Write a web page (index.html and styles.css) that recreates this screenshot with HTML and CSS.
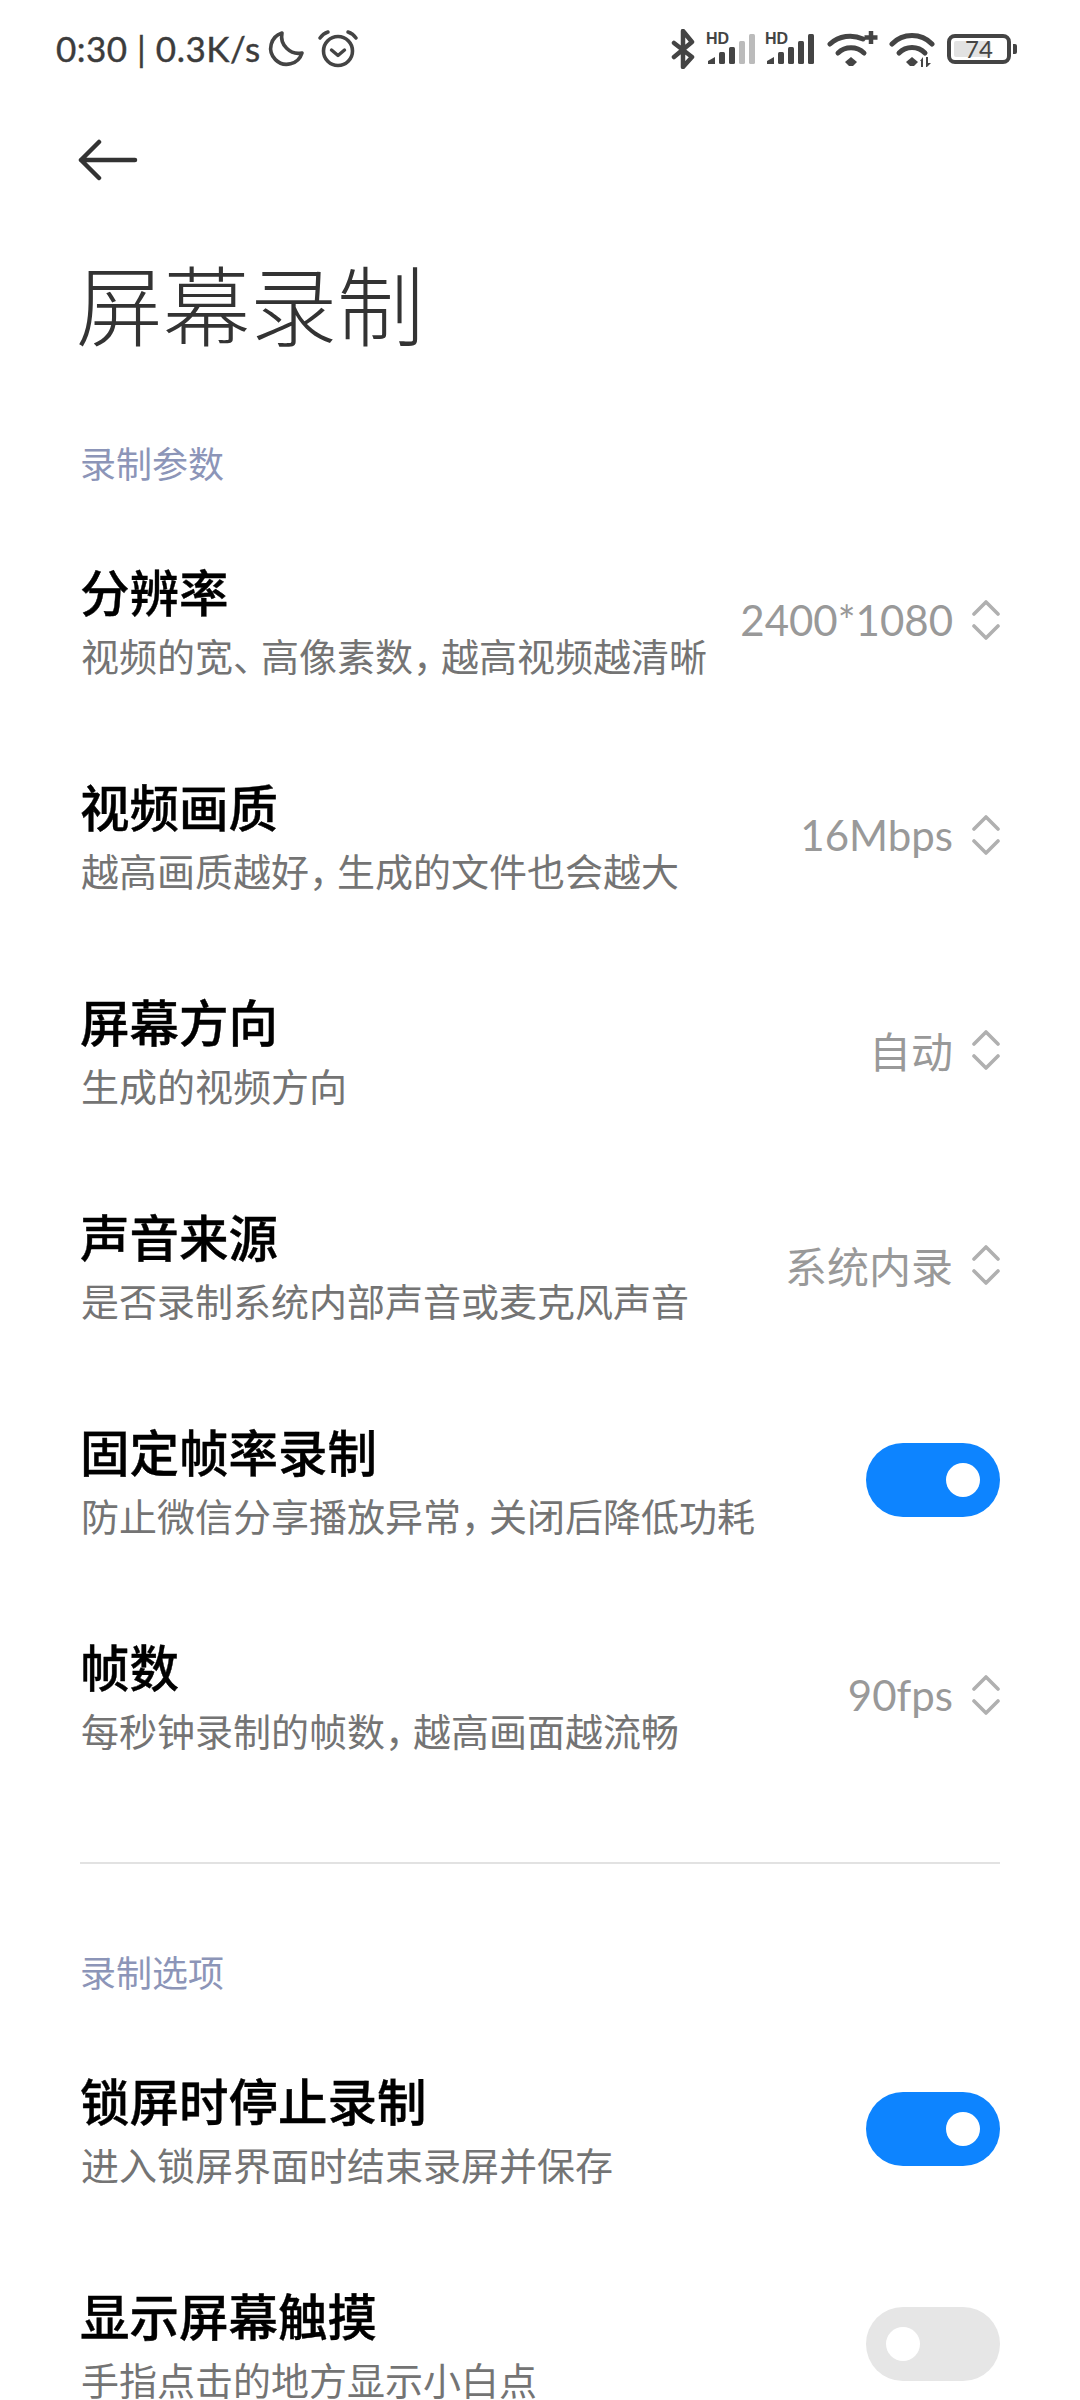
FILE: index.html
```html
<!DOCTYPE html>
<html lang="zh-CN">
<head>
  <meta charset="UTF-8" />
  <meta name="viewport" content="width=device-width, initial-scale=1.0" />
  <title>屏幕录制</title>
  <link rel="stylesheet" href="styles.css">
</head>
<body>
  <div class="status-bar">
    <div class="status-left">
      <span class="status-text">0:30 | 0.3K/s</span>
      <svg class="moon" width="38" height="38" viewBox="0 0 38 38"><path d="M15 3 A16 16 0 1 0 35 23 A17 17 0 0 1 15 3 Z" fill="none" stroke="#444" stroke-width="3.6" stroke-linejoin="round"/></svg>
      <svg class="alarm" width="40" height="38" viewBox="0 0 40 38"><circle cx="20" cy="21" r="14.5" fill="none" stroke="#444" stroke-width="3.6"/><path d="M13.500 20 L20 25.500 L26.500 20" fill="none" stroke="#444" stroke-width="3.4" stroke-linecap="round" stroke-linejoin="round"/><path d="M2 8 Q5 3.500 10 2 M30 2 Q35 3.500 38 8" fill="none" stroke="#444" stroke-width="3.4" stroke-linecap="round"/></svg>
    </div>
    <div class="status-right">
      <svg class="bt" width="24" height="40" viewBox="0 0 24 40"><path d="M3 14 L21 28 L12 38 V2 L21 13 L3 28" fill="none" stroke="#444" stroke-width="4.500" stroke-linecap="round" stroke-linejoin="round"/></svg>
      <div class="signal first">
        <span class="hd">HD</span>
        <svg width="50" height="34" viewBox="0 0 50 34"><g fill="#444"><path d="M2 29 L9 25 V32 H2 Z"/><rect x="13" y="20" width="6" height="12" rx="1.500"/><rect x="23" y="15" width="6" height="17" rx="1.500"/></g><rect x="33" y="9" width="6" height="23" rx="1.500" fill="#bbb"/><rect x="43" y="2" width="6" height="30" rx="1.500" fill="#bbb"/></svg>
      </div>
      <div class="signal">
        <span class="hd">HD</span>
        <svg width="50" height="34" viewBox="0 0 50 34"><g fill="#444"><path d="M2 29 L9 25 V32 H2 Z"/><rect x="13" y="20" width="6" height="12" rx="1.500"/><rect x="23" y="15" width="6" height="17" rx="1.500"/><rect x="33" y="9" width="6" height="23" rx="1.500"/><rect x="43" y="2" width="6" height="30" rx="1.500"/></g></svg>
      </div>
      <svg width="51" height="36" viewBox="0 0 51 36"><g fill="none" stroke="#444" stroke-width="5" stroke-linecap="round"><path d="M3 13 A30 30 0 0 1 36 8"/><path d="M11 22 A19 19 0 0 1 37 22"/></g><path d="M24 26 L30 31 L26 35 H22 L18 31 Z" fill="#444"/><path d="M44 0 V13 M37.500 6.500 H50.500" stroke="#444" stroke-width="4.500"/></svg>
      <svg class="wifi-two" width="46" height="36" viewBox="0 0 46 36"><g fill="none" stroke="#444" stroke-width="5" stroke-linecap="round"><path d="M3 13 A28 28 0 0 1 43 13"/><path d="M10 22 A18 18 0 0 1 36 22"/></g><path d="M23 26 L29 31 L25 35 H21 L17 31 Z" fill="#444"/><path d="M31 30 L34 26 V36 H32 V30 Z M37 26 H39 V32 H42 L38 36 H37 Z" fill="#444"/></svg>
      <div class="battery">
        <div class="battery-body"><div class="battery-fill"></div><span class="battery-num">74</span></div>
        <div class="battery-tip"></div>
      </div>
    </div>
  </div>

  <div class="toolbar">
    <svg width="60" height="44" viewBox="0 0 60 44"><path d="M21 4 L3 22 L21 40 M3 22 H57" fill="none" stroke="#333" stroke-width="4.500" stroke-linecap="round" stroke-linejoin="round"/></svg>
  </div>

  <h1 class="page-title">屏幕录制</h1>

  <div class="section-label">录制参数</div>

  <div class="row">
    <div class="row-text"><div class="row-title">分辨率</div><div class="row-sub">视频的宽<span class="punct">、</span>高像素数<span class="punct">，</span>越高视频越清晰</div></div>
    <div class="row-value"><span>2400*1080</span><svg class="updown" width="29" height="44" viewBox="0 0 29 44"><path d="M3 16 L15 4 L27 16 M3 28 L15 40 L27 28" fill="none" stroke="#b0b0b0" stroke-width="3.600" stroke-linecap="round" stroke-linejoin="round"/></svg></div>
  </div>
  <div class="row">
    <div class="row-text"><div class="row-title">视频画质</div><div class="row-sub">越高画质越好<span class="punct">，</span>生成的文件也会越大</div></div>
    <div class="row-value"><span>16Mbps</span><svg class="updown" width="29" height="44" viewBox="0 0 29 44"><path d="M3 16 L15 4 L27 16 M3 28 L15 40 L27 28" fill="none" stroke="#b0b0b0" stroke-width="3.600" stroke-linecap="round" stroke-linejoin="round"/></svg></div>
  </div>
  <div class="row">
    <div class="row-text"><div class="row-title">屏幕方向</div><div class="row-sub">生成的视频方向</div></div>
    <div class="row-value"><span>自动</span><svg class="updown" width="29" height="44" viewBox="0 0 29 44"><path d="M3 16 L15 4 L27 16 M3 28 L15 40 L27 28" fill="none" stroke="#b0b0b0" stroke-width="3.600" stroke-linecap="round" stroke-linejoin="round"/></svg></div>
  </div>
  <div class="row">
    <div class="row-text"><div class="row-title">声音来源</div><div class="row-sub">是否录制系统内部声音或麦克风声音</div></div>
    <div class="row-value"><span>系统内录</span><svg class="updown" width="29" height="44" viewBox="0 0 29 44"><path d="M3 16 L15 4 L27 16 M3 28 L15 40 L27 28" fill="none" stroke="#b0b0b0" stroke-width="3.600" stroke-linecap="round" stroke-linejoin="round"/></svg></div>
  </div>
  <div class="row">
    <div class="row-text"><div class="row-title">固定帧率录制</div><div class="row-sub">防止微信分享播放异常<span class="punct">，</span>关闭后降低功耗</div></div>
    <div class="switch on"><div class="knob"></div></div>
  </div>
  <div class="row">
    <div class="row-text"><div class="row-title">帧数</div><div class="row-sub">每秒钟录制的帧数<span class="punct">，</span>越高画面越流畅</div></div>
    <div class="row-value"><span>90fps</span><svg class="updown" width="29" height="44" viewBox="0 0 29 44"><path d="M3 16 L15 4 L27 16 M3 28 L15 40 L27 28" fill="none" stroke="#b0b0b0" stroke-width="3.600" stroke-linecap="round" stroke-linejoin="round"/></svg></div>
  </div>

  <div class="divider"></div>

  <div class="section-label second">录制选项</div>

  <div class="row">
    <div class="row-text"><div class="row-title">锁屏时停止录制</div><div class="row-sub">进入锁屏界面时结束录屏并保存</div></div>
    <div class="switch on"><div class="knob"></div></div>
  </div>
  <div class="row">
    <div class="row-text"><div class="row-title">显示屏幕触摸</div><div class="row-sub">手指点击的地方显示小白点</div></div>
    <div class="switch"><div class="knob"></div></div>
  </div>
</body>
</html>
```

FILE: styles.css
```css
* {
  box-sizing: border-box;
}
html, body {
  margin: 0;
  height: 2400px;
  overflow: hidden;
}
body {
  background: #fff;
  font-family: Lato, "Noto Sans CJK SC", sans-serif;
  color: #111;
}
.status-bar {
  height: 98px;
  padding: 0 63px 0 56px;
  display: flex;
  justify-content: space-between;
  align-items: center;
}
.status-left, .status-right {
  display: flex;
  align-items: center;
}
.status-text {
  font-size: 35px;
  color: #3c3c3c;
  letter-spacing: 0.5px;
  margin-top: -2px;
  -webkit-text-stroke: 0.4px #3c3c3c;
}
.moon {
  margin-left: 6px;
}
.alarm {
  margin-left: 13px;
}
.status-right {
  gap: 12px;
}
.bt {
  margin-right: -1px;
}
.signal {
  position: relative;
  width: 50px;
  height: 34px;
}
.signal.first {
  margin-right: -3px;
}
.wifi-two {
  margin-left: -1px;
}
.hd {
  position: absolute;
  left: 0;
  top: 0;
  font: bold 16px/13px "Liberation Sans", sans-serif;
  color: #444;
}
.battery {
  display: flex;
  align-items: center;
  gap: 2px;
}
.battery-body {
  position: relative;
  width: 64px;
  height: 30px;
  border: 4px solid #444;
  border-radius: 8px;
  padding: 3px;
}
.battery-fill {
  width: 74%;
  height: 100%;
  background: #e2e2e2;
  border-radius: 2px;
}
.battery-num {
  position: absolute;
  inset: 0;
  text-align: center;
  font-size: 24px;
  line-height: 22px;
  color: #444;
}
.battery-tip {
  width: 4px;
  height: 10px;
  background: #444;
  border-radius: 0 2px 2px 0;
}
.toolbar {
  height: 44px;
  margin-top: 40px;
  padding-left: 78px;
  display: flex;
  align-items: center;
}
.page-title {
  margin: 70px 0 0;
  padding-left: 76px;
  font-size: 87px;
  font-weight: 300;
  line-height: 110px;
  color: #333;
}
.section-label {
  margin-top: 77px;
  margin-bottom: 23px;
  padding-left: 80px;
  font-size: 36px;
  line-height: 50px;
  color: #8c95b8;
}
.section-label.second {
  margin-top: 84px;
}
.row {
  height: 215px;
  padding: 0 80px 0 81px;
  display: flex;
  justify-content: space-between;
  align-items: center;
}
.row-text {
  padding-top: 8px;
}
.row-title {
  font-size: 49.5px;
  font-weight: 500;
  line-height: 64px;
  color: #000;
  margin-left: -1px;
  -webkit-text-stroke: 0.4px #000;
}
.row-sub {
  font-size: 38px;
  line-height: 62px;
  color: #747474;
}
.punct {
  letter-spacing: -10px;
}
.row-value {
  display: flex;
  align-items: center;
  gap: 18px;
  font-size: 42px;
  color: #999;
}
.switch {
  width: 134px;
  height: 74px;
  border-radius: 37px;
  background: #e6e6e6;
  padding: 20px;
}
.knob {
  width: 34px;
  height: 34px;
  border-radius: 50%;
  background: #fff;
}
.switch.on {
  background: #0d84ff;
  display: flex;
  justify-content: flex-end;
}
.divider {
  height: 2px;
  margin: 60px 80px 0;
  background: #e2e2e2;
}
```
